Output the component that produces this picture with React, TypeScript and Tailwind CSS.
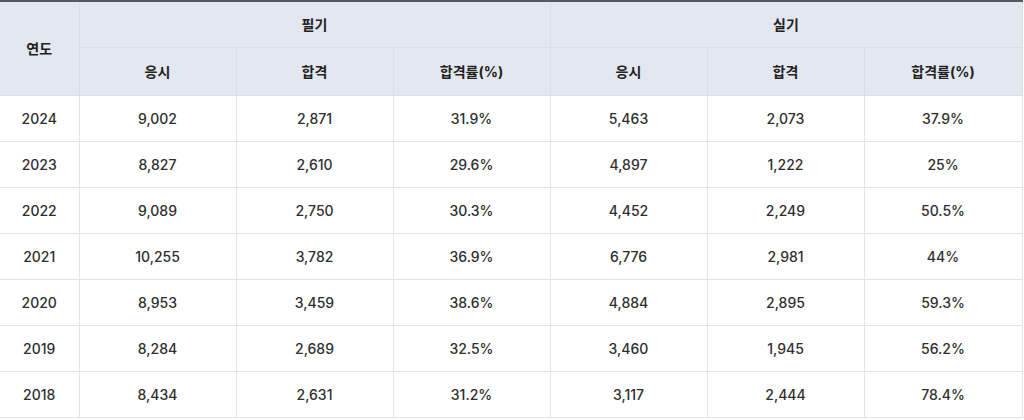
import React from 'react';

const rows = [
  ['2024', '9,002', '2,871', '31.9%', '5,463', '2,073', '37.9%'],
  ['2023', '8,827', '2,610', '29.6%', '4,897', '1,222', '25%'],
  ['2022', '9,089', '2,750', '30.3%', '4,452', '2,249', '50.5%'],
  ['2021', '10,255', '3,782', '36.9%', '6,776', '2,981', '44%'],
  ['2020', '8,953', '3,459', '38.6%', '4,884', '2,895', '59.3%'],
  ['2019', '8,284', '2,689', '32.5%', '3,460', '1,945', '56.2%'],
  ['2018', '8,434', '2,631', '31.2%', '3,117', '2,444', '78.4%'],
];

const th = 'border border-[#d9dde4] bg-[#e3e7ef] font-bold text-[14px] text-[#222]';
const td = 'border border-[#e2e4e8] font-medium text-[14px] text-[#2e2e2e]';

export default function App() {
  return (
    <div className="h-[420px] w-[1024px] overflow-hidden bg-white font-['Inter','Noto_Sans_CJK_KR',sans-serif]">
      <table className="w-[1022px] table-fixed border-collapse border-t-2 border-t-[#55585e] text-center">
        <colgroup>
          <col className="w-[79px]" />
          <col className="w-[157px]" />
          <col className="w-[157px]" />
          <col className="w-[157px]" />
          <col className="w-[157px]" />
          <col className="w-[157px]" />
          <col className="w-[158px]" />
        </colgroup>
        <thead>
          <tr className="h-[46px]">
            <th rowSpan={2} className={`${th} border-l-0`}>연도</th>
            <th colSpan={3} className={th}>필기</th>
            <th colSpan={3} className={th}>실기</th>
          </tr>
          <tr className="h-[48px]">
            <th className={th}>응시</th>
            <th className={th}>합격</th>
            <th className={th}>합격률(%)</th>
            <th className={th}>응시</th>
            <th className={th}>합격</th>
            <th className={th}>합격률(%)</th>
          </tr>
        </thead>
        <tbody>
          {rows.map((r) => (
            <tr key={r[0]} className="h-[46px]">
              {r.map((c, i) => (
                <td key={i} className={`${td} ${i === 0 ? 'border-l-0' : ''}`}>
                  {c}
                </td>
              ))}
            </tr>
          ))}
        </tbody>
      </table>
    </div>
  );
}
